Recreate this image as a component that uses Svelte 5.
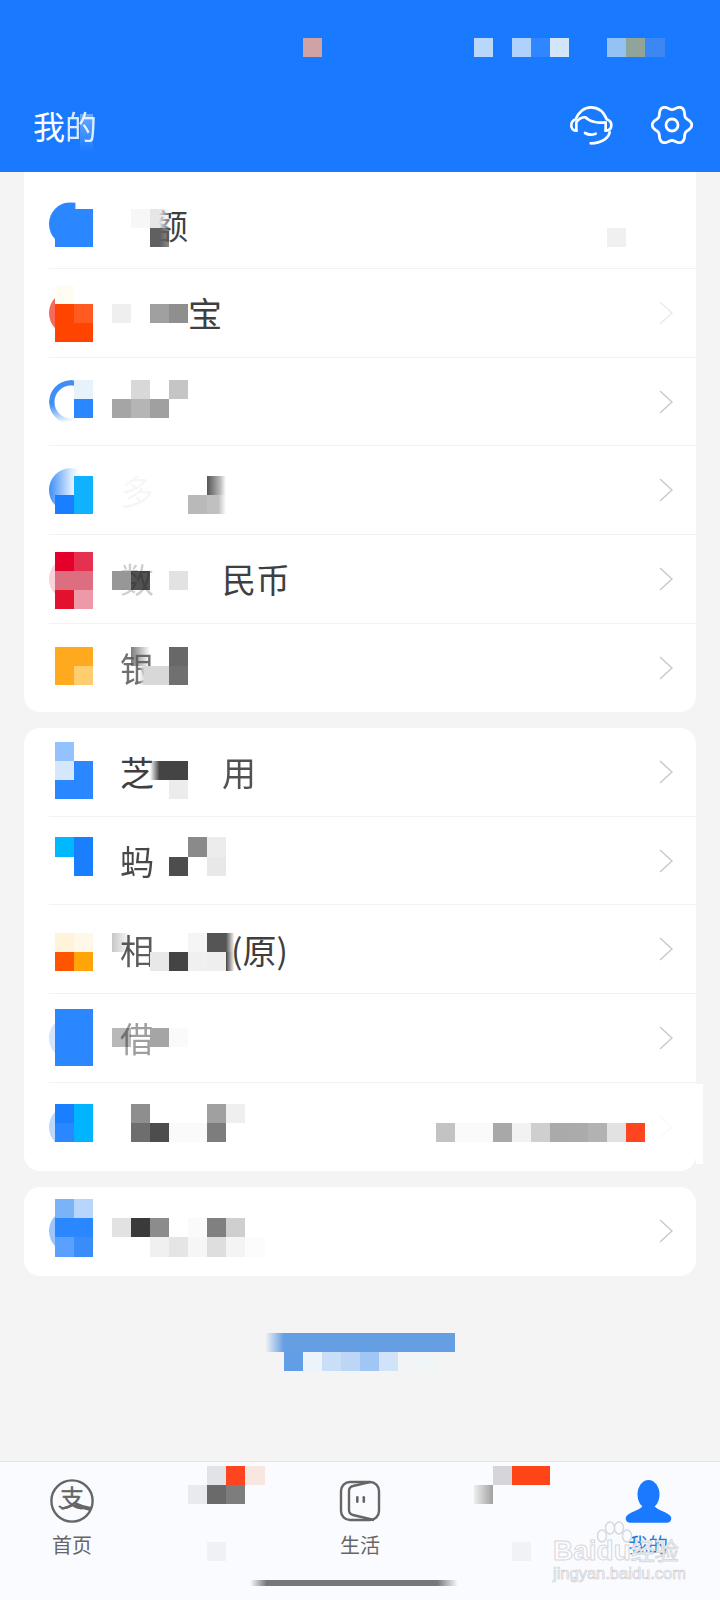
<script>
  // rows of the list; label parts are [text, opacity], 0 = covered by the mosaic
  const cards = [
    [
      { disc: 'blue', chevron: 0, label: [['余', 0], ['额', 1]] },
      { disc: 'red', chevron: 0.4, label: [['余额', 0], ['宝', 1]] },
      { disc: 'crescent', chevron: 1, label: [] },
      { disc: 'fade', chevron: 1, label: [['多', 0.04]] },
      { disc: 'pink', chevron: 1, label: [['数', 0.25], ['字人', 0], ['民币', 1]] },
      { disc: '', chevron: 1, label: [['银', 0.75]] }
    ],
    [
      { disc: '', chevron: 1, label: [['芝', 1], ['麻信', 0], ['用', 0.9]] },
      { disc: '', chevron: 1, label: [['蚂', 0.95]] },
      { disc: '', chevron: 1, label: [['相', 0.85], ['互宝', 0], ['(原)', 1, 'paren']] },
      { disc: 'pale', chevron: 1, label: [['借', 0.5]] },
      { disc: 'sliver', chevron: 0.1, label: [] }
    ],
    [{ disc: 'sky', chevron: 1, label: [] }]
  ];

  const tabs = ['首页', '理财', '生活', '消息', '我的'];

  // mosaic blocks: row -> [column, background]
  const blocks = {
    0: [[13, '#cfa3a3'], [22, '#b9d6fb'], [24, '#aed2fb'], [25, '#2f86ff'], [26, '#d2e5fb'], [29, '#93c2f5'], [30, '#8fa59a'], [31, '#3b88f5']],
    9: [[0, '#2b87ff'], [1, '#2b87ff'], [4, '#f7f7f7'], [5, 'linear-gradient(90deg,#e6e6e6 45%,rgba(230,230,230,.3))']],
    10: [[0, '#2b87ff'], [1, '#2b87ff'], [5, 'linear-gradient(90deg,#606060 50%,rgba(96,96,96,.75))'], [29, '#f0f0f0']],
    13: [[0, '#fffdf2']],
    14: [[0, '#ff4400'], [1, '#ff5a20'], [3, '#efefef'], [5, '#a0a0a0'], [6, '#8f8f8f']],
    15: [[0, '#ff4400'], [1, '#ff4400']],
    18: [[1, '#e6f3fd'], [4, '#d8d8d8'], [6, '#c5c5c5']],
    19: [[1, '#2b87ff'], [3, '#a5a5a5'], [4, '#b5b5b5'], [5, '#a0a0a0']],
    23: [[1, '#10b2ff'], [8, 'linear-gradient(90deg,#555,#bbb 70%,#fff)']],
    24: [[0, '#1a7fff'], [1, '#10b2ff'], [7, '#b9b9b9'], [8, 'linear-gradient(90deg,#c0c0c0 60%,#fff)']],
    27: [[0, '#e4002b'], [1, '#e63050']],
    28: [[0, '#dd6e80'], [1, '#dd6e80'], [3, '#979797'], [4, 'rgba(0,0,0,.68)'], [6, '#e2e2e2']],
    29: [[0, '#e3102e'], [1, '#ee99a8']],
    32: [[0, '#ffa91f'], [1, '#ffa91f'], [4, 'linear-gradient(90deg,rgba(90,90,90,.8),rgba(90,90,90,0))'], [6, '#686868']],
    33: [[0, '#ffa91f'], [1, '#ffcc6e'], [4, 'linear-gradient(90deg,rgba(216,216,216,0) 40%,#d8d8d8 70%)'], [5, '#d8d8d8'], [6, '#707070']],
    37: [[0, '#93c2ff']],
    38: [[0, '#d6e7fb'], [1, '#2b87ff'], [5, 'linear-gradient(90deg,rgba(68,68,68,0),#444 50%)'], [6, '#444']],
    39: [[0, '#2b87ff'], [1, '#2b87ff'], [6, '#ececec']],
    42: [[0, '#00b8ff'], [1, '#1a7fff'], [7, '#8a8a8a'], [8, '#ececec']],
    43: [[1, '#1a7fff'], [6, '#4d4d4d'], [8, '#e8e8e8']],
    47: [[0, '#fff3dc'], [1, '#fff8e8'], [3, 'linear-gradient(90deg,rgba(0,0,0,.22),rgba(0,0,0,0))'], [7, '#f5f5f5'], [8, '#555'], [9, 'linear-gradient(90deg,#555,rgba(255,255,255,0) 45%)']],
    48: [[0, '#ff5500'], [1, '#ffa50a'], [5, '#e8e8e8'], [6, '#444'], [7, '#f0f0f0'], [8, '#eee'], [9, 'linear-gradient(90deg,#444,rgba(255,255,255,0) 45%)']],
    51: [[0, '#2b87ff'], [1, '#2b87ff']],
    52: [[0, '#2b87ff'], [1, '#2b87ff'], [3, 'rgba(0,0,0,.28)'], [5, '#a5a5a5'], [6, '#fafafa']],
    53: [[0, '#2b87ff'], [1, '#2b87ff']],
    56: [[0, '#1a7fff'], [1, '#00b4ff'], [4, '#8e8e8e'], [8, '#a0a0a0'], [9, '#efefef']],
    57: [[0, '#2b87ff'], [1, '#00b4ff'], [4, '#6e6e6e'], [5, '#4d4d4d'], [6, '#fafafa'], [7, '#fafafa'], [8, '#7d7d7d'], [20, '#c3c3c3'], [21, '#fafafa'], [22, '#fafafa'], [23, '#a8a8a8'], [24, '#f2f2f2'], [25, '#cfcfcf'], [26, '#aaa'], [27, '#ababab'], [28, '#b2b2b2'], [29, '#e2e2e2'], [30, '#ff4520']],
    61: [[0, '#7ab3f8'], [1, '#b8d6fb']],
    62: [[0, '#2b87ff'], [1, '#2b87ff'], [3, '#e2e2e2'], [4, '#3a3a3a'], [5, '#8c8c8c'], [7, '#fafafa'], [8, '#808080'], [9, '#cfcfcf']],
    63: [[0, '#5aa0ff'], [1, '#3a8df8'], [5, '#f0f0f0'], [6, '#e5e5e5'], [7, '#f6f6f6'], [8, '#dedede'], [9, '#f4f4f4'], [10, '#fcfcfc']],
    68: [[11, 'linear-gradient(90deg,#f4f4f5,#659ee3)'], [12, '#659ee3'], [13, '#659ee3'], [14, '#659ee3'], [15, '#659ee3'], [16, '#659ee3'], [17, '#659ee3'], [18, '#659ee3'], [19, '#659ee3'], [20, '#659ee3']],
    69: [[12, '#619ee5'], [13, '#edf3fb'], [14, '#c9dff8'], [15, '#bdd6f5'], [16, '#9fc6f4'], [17, '#d0e3f9'], [18, '#f2f4f6'], [19, '#f0f5f8']],
    75: [[8, '#e2e3e6'], [9, '#ff4520'], [10, '#f8e6e0'], [23, '#d6d6da'], [24, '#ff4518'], [25, '#ff4518']],
    76: [[7, '#e9eaee'], [8, '#6a6a6a'], [9, '#7d7d7d'], [22, 'linear-gradient(90deg,#eee,#a0a0a0)']],
    79: [[8, '#f0f1f4'], [24, '#f1f2f5']]
  };

  const cells = Object.entries(blocks).flatMap(([row, list]) =>
    list.map(([col, bg]) => ({ row: +row + 1, col: col + 1, bg }))
  );

  // six soft lobes around the settings wheel
  const gear = Array.from({ length: 72 }, (_, i) => {
    const a = (i * 5 * Math.PI) / 180;
    const r = 17.6 + 2.2 * Math.cos(6 * a);
    return `${(21 + r * Math.cos(a)).toFixed(2)},${(21 + r * Math.sin(a)).toFixed(2)}`;
  }).join(' ');
</script>

<div class="page">
  <header class="top">
    <div class="title-row">
      <h1>我<span class="fade-char">的</span></h1>
      <div class="actions">
        <svg width="45" height="42" viewBox="90 70 135 126" fill="none" stroke="#fff" stroke-width="8" stroke-linecap="round" stroke-linejoin="round">
          <path d="M112 150C100 150 96 140 97 132C98 122 104 118 110 116C118 95 135 80 155 80C178 80 195 95 203 116C212 119 217 125 217 133C217 143 212 150 200 150" />
          <path d="M112 150V125C118 115 130 108 140 110C150 122 175 128 200 125V150" />
          <path d="M138 157C148 163 160 163 170 159" />
          <path d="M212 155C208 172 190 187 155 188" />
        </svg>
        <svg width="42" height="42" viewBox="0 0 42 42" fill="none" stroke="#fff" stroke-width="2.8">
          <polygon points={gear} stroke-linejoin="round" />
          <circle cx="21" cy="21" r="6" />
        </svg>
      </div>
    </div>
  </header>

  <main class="list">
    {#each cards as rows}
      <section class="card">
        {#each rows as row}
          <div class="row">
            <div class="icon"><i class="disc {row.disc}"></i></div>
            <div class="label">
              {#each row.label as part}
                <span class={part[2] ?? ''} style="opacity: {part[1]}">{part[0]}</span>
              {/each}
            </div>
            <svg class="chevron" style="opacity: {row.chevron}" width="14" height="24" viewBox="0 0 14 24" fill="none" stroke="#c9c9c9" stroke-width="1.5">
              <path d="M1 1L13 12L1 23" />
            </svg>
          </div>
        {/each}
      </section>
    {/each}
  </main>

  <nav class="tabs">
    {#each tabs as tab, i}
      <div class="tab" class:on={i === 4}>
        <div class="tab-icon">
          {#if i === 0}
            <svg width="44" height="44" viewBox="0 0 44 44" fill="none" stroke="#666" stroke-width="2.4">
              <circle cx="22" cy="22" r="20.6" />
              <text x="22" y="28" text-anchor="middle" class="zhi">支</text>
              <path d="M9 27C13 31 20 29 24 24C29 27 35 29 41 30" stroke-width="2" />
              <path d="M25 25C30 27.5 35 29 41 30" stroke-width="4" />
            </svg>
          {:else if i === 2}
            <svg width="42" height="42" viewBox="0 0 42 42" fill="none" stroke="#666" stroke-width="2.4">
              <rect x="2" y="2" width="38" height="38" rx="9" />
              <path d="M31 2L14 6Q10 7 10 11V30Q10 34 14 35L35 40" />
              <rect x="17" y="16" width="2.6" height="7" rx="1.3" fill="#666" stroke="none" />
              <rect x="23.5" y="16" width="2.6" height="7" rx="1.3" fill="#666" stroke="none" />
            </svg>
          {:else if i === 4}
            <svg width="47" height="43" viewBox="0 0 47 43" fill="#1a7aff">
              <ellipse cx="23.5" cy="14.5" rx="11" ry="14.5" />
              <path d="M18 25H29C30 30 44 32 46 37C47 40 45 42.7 42 42.7H5C2 42.7 0 40 1 37C3 32 17 30 18 25Z" />
            </svg>
          {/if}
        </div>
        <span class:hidden={i === 1 || i === 3}>{tab}</span>
      </div>
    {/each}
  </nav>

  <div class="home-bar"></div>

  <div class="mosaic">
    {#each cells as c}
      <b style="grid-row: {c.row}; grid-column: {c.col}; background: {c.bg}"></b>
    {/each}
  </div>

  <div class="smear title-smear"></div>
  <div class="smear edge-smear"></div>

  <div class="watermark">
    <svg class="paw" width="36" height="26" viewBox="0 0 36 26" fill="#fafbff" stroke="#d8d8dc" stroke-width="1.4">
      <ellipse cx="6" cy="15" rx="4.5" ry="6" />
      <ellipse cx="14" cy="7" rx="4.5" ry="6" />
      <ellipse cx="23" cy="7" rx="4.5" ry="6" />
      <ellipse cx="31" cy="15" rx="4.5" ry="6" />
    </svg>
    <div class="mark-top">Baidu<span>经验</span></div>
    <div class="mark-url">jingyan.baidu.com</div>
  </div>
</div>

<style>
  :global(body) {
    margin: 0;
  }

  .page {
    position: relative;
    width: 720px;
    height: 1600px;
    overflow: hidden;
    display: flex;
    flex-direction: column;
    background: #f4f4f5;
    font-family: "Noto Sans CJK SC", "Noto Sans", sans-serif;
  }

  /* Header */
  .top {
    height: 172px;
    flex: none;
    box-sizing: border-box;
    padding: 103px 27px 0 33px;
    background: #1a7aff;
  }

  .title-row {
    display: flex;
    justify-content: space-between;
    align-items: center;
    height: 44px;
  }

  h1 {
    margin: 0;
    font-size: 32px;
    font-weight: 400;
    color: #fff;
  }

  .fade-char {
    opacity: 0.85;
  }

  .actions {
    display: flex;
    align-items: center;
    gap: 37px;
  }

  /* List */
  .list {
    display: flex;
    flex-direction: column;
    gap: 16px;
    padding: 0 24px;
  }

  .card {
    background: #fff;
    border-radius: 16px;
    overflow: hidden;
  }

  .card:first-child {
    padding-top: 8.6px;
    border-radius: 0 0 16px 16px;
  }

  .row {
    height: 88.6px;
    box-sizing: border-box;
    display: flex;
    align-items: center;
    margin-left: 25px;
    padding-right: 23px;
    border-bottom: 1px solid #f2f2f2;
  }

  .row:last-child {
    border-bottom: none;
  }

  .icon {
    width: 44px;
    height: 44px;
    flex: none;
  }

  .disc {
    display: block;
    width: 44px;
    height: 44px;
    box-sizing: border-box;
    border-radius: 50%;
  }

  .disc.blue {
    background: #2b87ff;
    clip-path: inset(0 40% 0 0);
  }
  .disc.red {
    background: #f56a5a;
    clip-path: inset(0 86% 0 0);
  }
  .disc.crescent {
    background: linear-gradient(165deg, #3f8ff5 45%, #fff 85%);
    mask: radial-gradient(circle, transparent 16px, #000 17px);
    clip-path: inset(0 40% 0 0);
  }
  .disc.fade {
    background: linear-gradient(90deg, #3d8ff7, #d9e9fd 50%, #fff 70%);
  }
  .disc.pink {
    background: #f9d3d9;
    clip-path: inset(0 86% 0 0);
  }
  .disc.pale {
    background: #d4e5fb;
    clip-path: inset(0 86% 0 0);
  }
  .disc.sliver {
    background: #bcd8fb;
    clip-path: inset(0 86% 0 0);
  }
  .disc.sky {
    background: #9cc6fb;
    clip-path: inset(0 86% 0 0);
  }

  .label {
    flex: 1;
    margin-left: 27px;
    font-size: 34px;
    color: #3f3f3f;
    white-space: nowrap;
  }

  .paren {
    margin-left: 9px;
  }

  /* Tab bar */
  .tabs {
    margin-top: auto;
    height: 139px;
    box-sizing: border-box;
    display: grid;
    grid-template-columns: repeat(5, 1fr);
    padding-top: 17px;
    background: #fafbff;
    border-top: 1px solid #e4e5e8;
  }

  .tab {
    display: flex;
    flex-direction: column;
    align-items: center;
    font-size: 20px;
    line-height: 26px;
    color: #666;
  }

  .tab.on {
    color: #2a7ad5;
  }

  .tab-icon {
    height: 44px;
    margin-bottom: 9px;
    display: flex;
    align-items: center;
    justify-content: center;
  }

  .hidden {
    visibility: hidden;
  }

  .zhi {
    font-size: 24px;
    fill: #666;
    stroke: #666;
    stroke-width: 0.4;
  }

  /* Overlays */
  .home-bar {
    position: absolute;
    left: 250px;
    bottom: 14px;
    width: 208px;
    height: 6px;
    background: linear-gradient(90deg, #fafbff, #77777b 8%, #77777b 90%, #fafbff);
  }

  .mosaic {
    position: absolute;
    left: 55px;
    top: 37.5px;
    display: grid;
    grid-auto-columns: 19.06px;
    grid-auto-rows: 19.06px;
    pointer-events: none;
  }

  .smear {
    position: absolute;
  }

  .title-smear {
    left: 80px;
    top: 114px;
    width: 13px;
    height: 38px;
    background: linear-gradient(180deg, rgba(255, 255, 255, 0.35), rgba(26, 122, 255, 0));
  }

  .edge-smear {
    left: 696px;
    top: 1084px;
    width: 7px;
    height: 80px;
    background: #fff;
  }

  .watermark {
    position: absolute;
    left: 553px;
    top: 1521px;
    width: 140px;
    font-family: "Liberation Sans", sans-serif;
    color: #fafbff;
    -webkit-text-stroke: 1px #d8d8dc;
  }

  .paw {
    display: block;
    margin: 0 0 -9px 43px;
  }

  .mark-top {
    font-size: 28px;
    font-weight: 700;
    line-height: 24px;
    white-space: nowrap;
  }

  .mark-top span {
    font-family: "Noto Sans CJK SC", sans-serif;
    font-size: 24px;
    font-weight: 400;
  }

  .mark-url {
    margin-top: 1px;
    font-size: 16.5px;
    line-height: 18px;
    white-space: nowrap;
    color: transparent;
    -webkit-text-stroke: 0.7px #cfcfd3;
  }
</style>
